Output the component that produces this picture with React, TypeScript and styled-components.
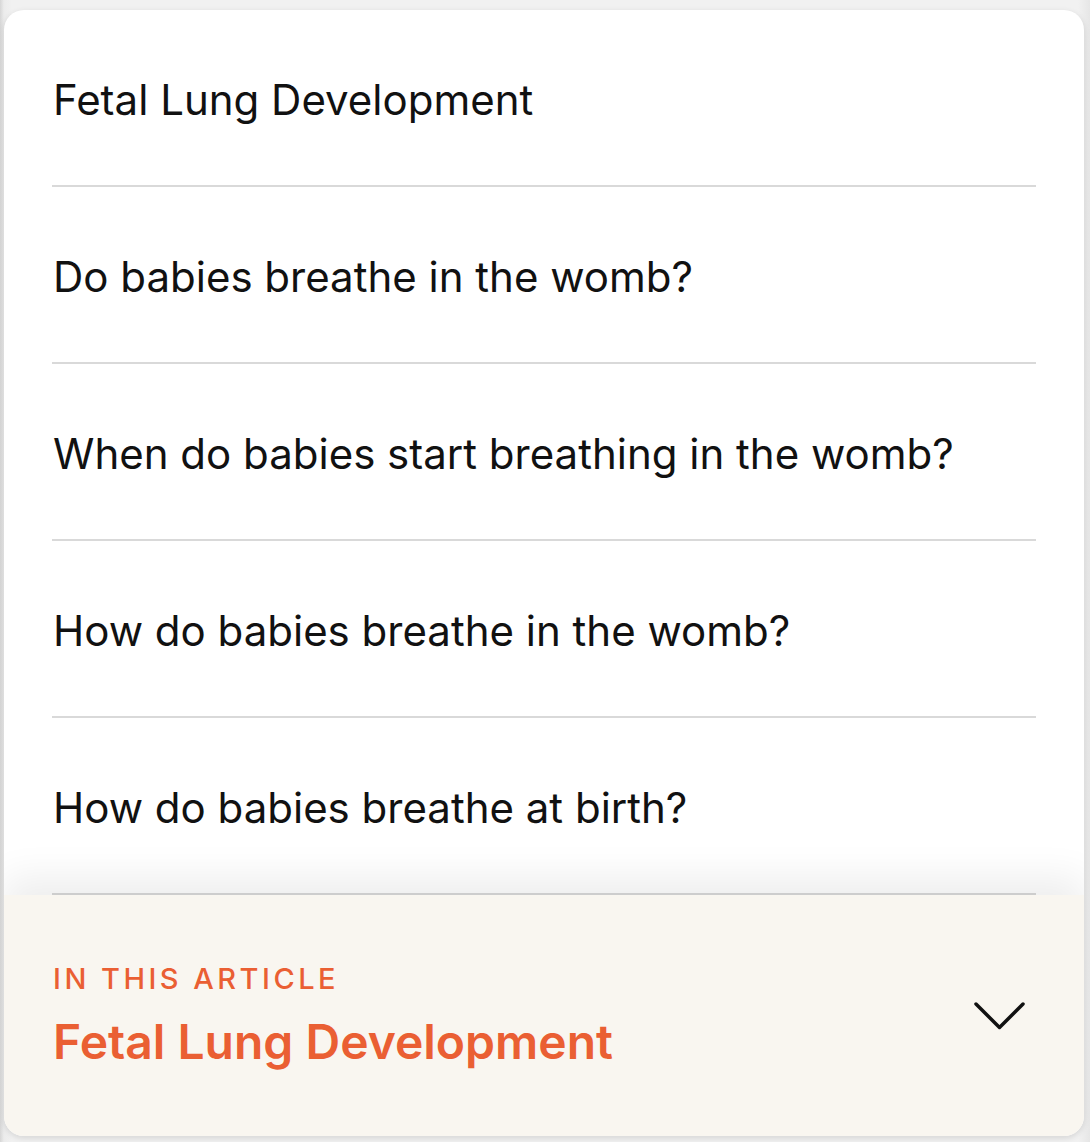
import React from "react";
import styled, { createGlobalStyle } from "styled-components";

const GlobalStyle = createGlobalStyle`
  html, body {
    margin: 0;
    padding: 0;
    background: #f1f1f1;
  }
  body {
    font-family: Inter, "Noto Sans", sans-serif;
    -webkit-font-smoothing: antialiased;
  }
`;

const Page = styled.div`
  width: 1090px;
  height: 1142px;
  box-sizing: border-box;
  padding: 10px 6px 6px 4px;
  background: linear-gradient(90deg, #d6d6d6 0px, #ececec 4px, #f1f1f1 12px, #f1f1f1 calc(100% - 12px), #e6e6e6 100%);
`;

const Card = styled.div`
  height: 100%;
  display: flex;
  flex-direction: column;
  background: #ffffff;
  border-radius: 20px;
  overflow: hidden;
  box-shadow: 0 2px 6px rgba(0, 0, 0, 0.12);
`;

const List = styled.ul`
  flex: 1;
  margin: 0;
  padding: 0 48px;
  list-style: none;
  overflow: hidden;
`;

const Item = styled.li`
  height: 177px;
  box-sizing: border-box;
  display: flex;
  align-items: center;
  padding: 4px 1px 0;
  border-bottom: 2px solid #d9d9d9;
  font-size: 42px;
  font-weight: 400;
  color: #111111;
`;

const Footer = styled.div`
  position: relative;
  z-index: 1;
  height: 241px;
  flex-shrink: 0;
  display: flex;
  align-items: center;
  justify-content: space-between;
  padding: 0 58px 0 49px;
  background: #f9f6f0;
  box-shadow: 0 -18px 36px rgba(0, 0, 0, 0.07);
`;

const TextBlock = styled.div`
  display: flex;
  flex-direction: column;
  gap: 16px;
  padding-top: 2px;
`;

const Label = styled.span`
  font-size: 29px;
  font-weight: 500;
  letter-spacing: 0.12em;
  color: #ea5f33;
  line-height: 1.2;
`;

const Title = styled.span`
  font-size: 48px;
  font-weight: 600;
  color: #ea5f33;
  line-height: 1.2;
`;

const Chevron = styled.svg`
  width: 52px;
  height: 30px;
`;

const items = [
  "Fetal Lung Development",
  "Do babies breathe in the womb?",
  "When do babies start breathing in the womb?",
  "How do babies breathe in the womb?",
  "How do babies breathe at birth?",
];

export default function App() {
  return (
    <>
      <GlobalStyle />
      <Page>
        <Card>
          <List>
            {items.map((t) => (
              <Item key={t}>{t}</Item>
            ))}
          </List>
          <Footer>
            <TextBlock>
              <Label>IN THIS ARTICLE</Label>
              <Title>Fetal Lung Development</Title>
            </TextBlock>
            <Chevron viewBox="0 0 52 30" fill="none">
              <path
                d="M2 3 L25.5 26.5 L49 3"
                stroke="#111"
                strokeWidth="3.5"
                strokeLinecap="round"
                strokeLinejoin="round"
              />
            </Chevron>
          </Footer>
        </Card>
      </Page>
    </>
  );
}
